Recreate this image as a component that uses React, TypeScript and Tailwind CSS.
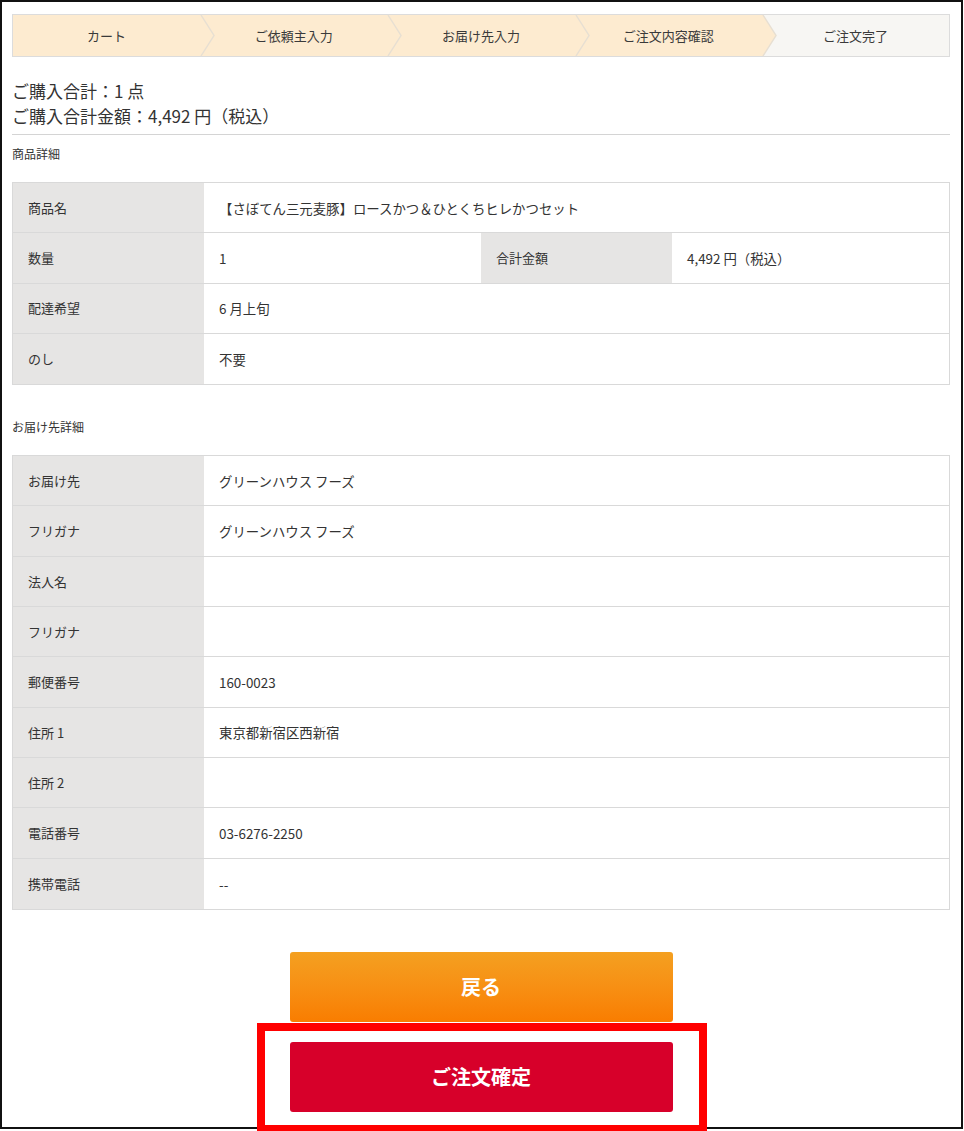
import React from 'react';

const STEPS = ['カート', 'ご依頼主入力', 'お届け先入力', 'ご注文内容確認', 'ご注文完了'];

const ITEM_ROWS: { label: string; value: string }[] = [
  { label: '配達希望', value: '6 月上旬' },
  { label: 'のし', value: '不要' },
];

const ADDRESS_ROWS: { label: string; value: string }[] = [
  { label: 'お届け先', value: 'グリーンハウス フーズ' },
  { label: 'フリガナ', value: 'グリーンハウス フーズ' },
  { label: '法人名', value: '' },
  { label: 'フリガナ', value: '' },
  { label: '郵便番号', value: '160-0023' },
  { label: '住所 1', value: '東京都新宿区西新宿' },
  { label: '住所 2', value: '' },
  { label: '電話番号', value: '03-6276-2250' },
  { label: '携帯電話', value: '--' },
];

/* ── Step bar chevron ─────────────────────────────────── */
function Chevron({ filled }: { filled: boolean }) {
  return (
    <svg
      className="absolute top-0 left-full z-10 -ml-[1px] h-full w-[15px] overflow-visible"
      viewBox="0 0 15 43"
      preserveAspectRatio="none"
    >
      {filled && <polygon points="0,0 2,0 15,22 2,43 0,43" fill="#fdebd0" />}
      <polyline points="2,0 15,21.5 2,43" fill="none" stroke="#e7dfd2" strokeWidth="1.5" />
    </svg>
  );
}

function StepBar() {
  return (
    <div className="flex h-[43px] border border-[#dcdcdc]">
      {STEPS.map((s, i) => (
        <div
          key={s}
          className={
            'relative flex flex-1 items-center justify-center text-[13px] text-[#3a3a3a] ' +
            (i === STEPS.length - 1 ? 'bg-[#f7f6f3]' : 'bg-[#fdebd0]')
          }
        >
          {s}
          {i < STEPS.length - 1 && <Chevron filled={i === STEPS.length - 2} />}
        </div>
      ))}
    </div>
  );
}

function Row({ label, value }: { label: string; value: string }) {
  return (
    <div className="flex h-[50.3px] border-b border-[#d9d9d9] last:border-b-0">
      <div className="flex w-[191px] shrink-0 items-center bg-[#e6e5e4] pl-[15px] text-[13px] text-[#333]">
        {label}
      </div>
      <div className="flex flex-1 items-center pl-[15px] text-[13.4px] text-[#333]">{value}</div>
    </div>
  );
}

export default function App() {
  return (
    <div
      className="relative h-[1131px] w-[964px] bg-white"
      style={{ fontFamily: '"Noto Sans CJK JP", "Noto Sans", sans-serif' }}
    >
      <div className="h-[1129px] w-[963px] border-2 border-[#111] pl-[10px] pr-[11px] pt-[12px]">
        <StepBar />

        {/* Totals */}
        <div className="mt-[21px] text-[17px] leading-[25px] text-[#333]">
          <p>ご購入合計：1 点</p>
          <p>ご購入合計金額：4,492 円（税込）</p>
        </div>
        <div className="mt-[6px] h-px bg-[#d4d4d4]" />

        {/* Item details */}
        <p className="mt-[10px] text-[12px] leading-[18px] text-[#333]">商品詳細</p>
        <div className="mt-[19px] border border-[#d9d9d9]">
          <Row label="商品名" value="【さぼてん三元麦豚】ロースかつ＆ひとくちヒレかつセット" />
          <div className="flex h-[50.3px] border-b border-[#d9d9d9]">
            <div className="flex w-[191px] shrink-0 items-center bg-[#e6e5e4] pl-[15px] text-[13px] text-[#333]">
              数量
            </div>
            <div className="flex w-[277px] items-center pl-[15px] text-[13.4px] text-[#333]">1</div>
            <div className="flex w-[191px] shrink-0 items-center bg-[#e6e5e4] pl-[15px] text-[13px] text-[#333]">
              合計金額
            </div>
            <div className="flex flex-1 items-center pl-[15px] text-[13.4px] text-[#333]">
              4,492 円（税込）
            </div>
          </div>
          {ITEM_ROWS.map((r) => (
            <Row key={r.label} label={r.label} value={r.value} />
          ))}
        </div>

        {/* Delivery details */}
        <p className="mt-[33px] text-[12px] leading-[18px] text-[#333]">お届け先詳細</p>
        <div className="mt-[19px] border border-[#d9d9d9]">
          {ADDRESS_ROWS.map((r, i) => (
            <Row key={i} label={r.label} value={r.value} />
          ))}
        </div>

        {/* Actions */}
        <div className="mt-[42px] flex flex-col items-center gap-[20px]">
          <button className="h-[70px] w-[383px] rounded-[3px] bg-gradient-to-b from-[#f4a020] to-[#f97d00] text-[20px] font-bold text-white">
            戻る
          </button>
          <button className="h-[70px] w-[383px] rounded-[3px] bg-[#d7002a] text-[20px] font-bold text-white">
            ご注文確定
          </button>
        </div>
      </div>

      {/* Annotation highlight */}
      <div className="absolute left-[257px] top-[1023px] h-[110px] w-[450px] border-[8px] border-[#ff0000]" />
    </div>
  );
}
